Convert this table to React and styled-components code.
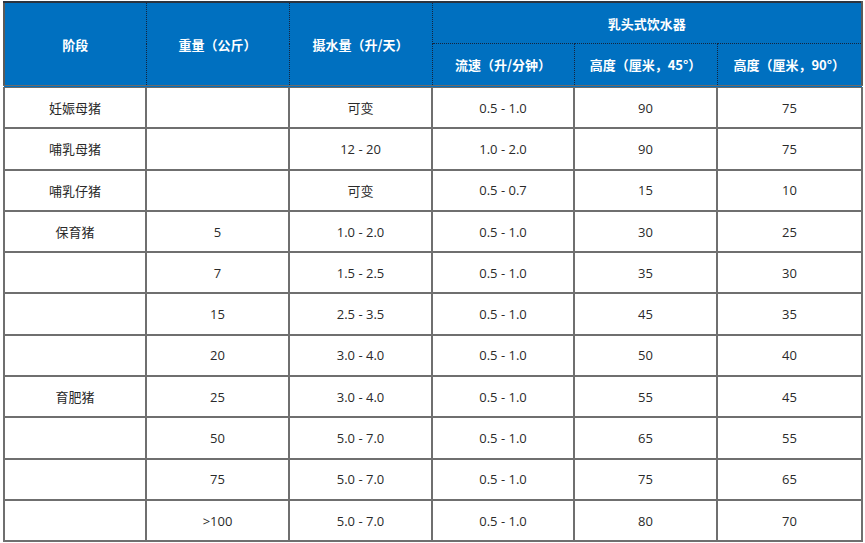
import React from 'react';
import styled, { createGlobalStyle } from 'styled-components';

const GlobalStyle = createGlobalStyle`
  html, body {
    margin: 0;
    padding: 0;
    background: #fff;
  }
  body {
    font-family: "Open Sans", "Noto Sans CJK SC", sans-serif;
  }
`;

const colWidths = [142, 143, 143, 142, 143, 145];

const rows = [
  ['妊娠母猪', '', '可变', '0.5 - 1.0', '90', '75'],
  ['哺乳母猪', '', '12 - 20', '1.0 - 2.0', '90', '75'],
  ['哺乳仔猪', '', '可变', '0.5 - 0.7', '15', '10'],
  ['保育猪', '5', '1.0 - 2.0', '0.5 - 1.0', '30', '25'],
  ['', '7', '1.5 - 2.5', '0.5 - 1.0', '35', '30'],
  ['', '15', '2.5 - 3.5', '0.5 - 1.0', '45', '35'],
  ['', '20', '3.0 - 4.0', '0.5 - 1.0', '50', '40'],
  ['育肥猪', '25', '3.0 - 4.0', '0.5 - 1.0', '55', '45'],
  ['', '50', '5.0 - 7.0', '0.5 - 1.0', '65', '55'],
  ['', '75', '5.0 - 7.0', '0.5 - 1.0', '75', '65'],
  ['', '>100', '5.0 - 7.0', '0.5 - 1.0', '80', '70'],
];

const Page = styled.div`
  padding: 1px 0 0 3px;
`;

const Table = styled.table`
  width: 858px;
  table-layout: fixed;
  border-collapse: collapse;
  border-top: 2px solid #2b3440;
  border-left: 2px solid #5a5a5a;
  border-right: 2px solid #5a5a5a;
  border-bottom: 2px solid #6a6a6a;
`;

const Col = styled.col`
  width: ${p => p.$w}px;
`;

const Head = styled.thead`
  border-bottom: 3px double #6a6a6a;
`;

const HeadCell = styled.th`
  background: #0070c0;
  color: #fff;
  font-family: "Noto Sans CJK SC", sans-serif;
  font-size: 13px;
  font-weight: 700;
  height: ${p => p.$h}px;
  padding: 0;
  text-align: center;
  vertical-align: middle;
  border: 1px dotted #14253f;
  border-top: none;
`;

const Cell = styled.td`
  height: 39.3px;
  padding: 0;
  text-align: center;
  vertical-align: middle;
  color: #2a2a2a;
  font-size: 13px;
  border: 2px solid #6f6f6f;
`;

export default function App() {
  return (
    <Page>
      <GlobalStyle />
      <Table>
        <colgroup>
          {colWidths.map((w, i) => (
            <Col key={i} $w={w} />
          ))}
        </colgroup>
        <Head>
          <tr>
            <HeadCell rowSpan={2} $h={40}>阶段</HeadCell>
            <HeadCell rowSpan={2} $h={40}>重量（公斤）</HeadCell>
            <HeadCell rowSpan={2} $h={40}>摄水量（升/天）</HeadCell>
            <HeadCell colSpan={3} $h={40}>乳头式饮水器</HeadCell>
          </tr>
          <tr>
            <HeadCell $h={41}>流速（升/分钟）</HeadCell>
            <HeadCell $h={41}>高度（厘米，45°）</HeadCell>
            <HeadCell $h={41}>高度（厘米，90°）</HeadCell>
          </tr>
        </Head>
        <tbody>
          {rows.map((r, i) => (
            <tr key={i}>
              {r.map((c, j) => (
                <Cell key={j}>{c}</Cell>
              ))}
            </tr>
          ))}
        </tbody>
      </Table>
    </Page>
  );
}
